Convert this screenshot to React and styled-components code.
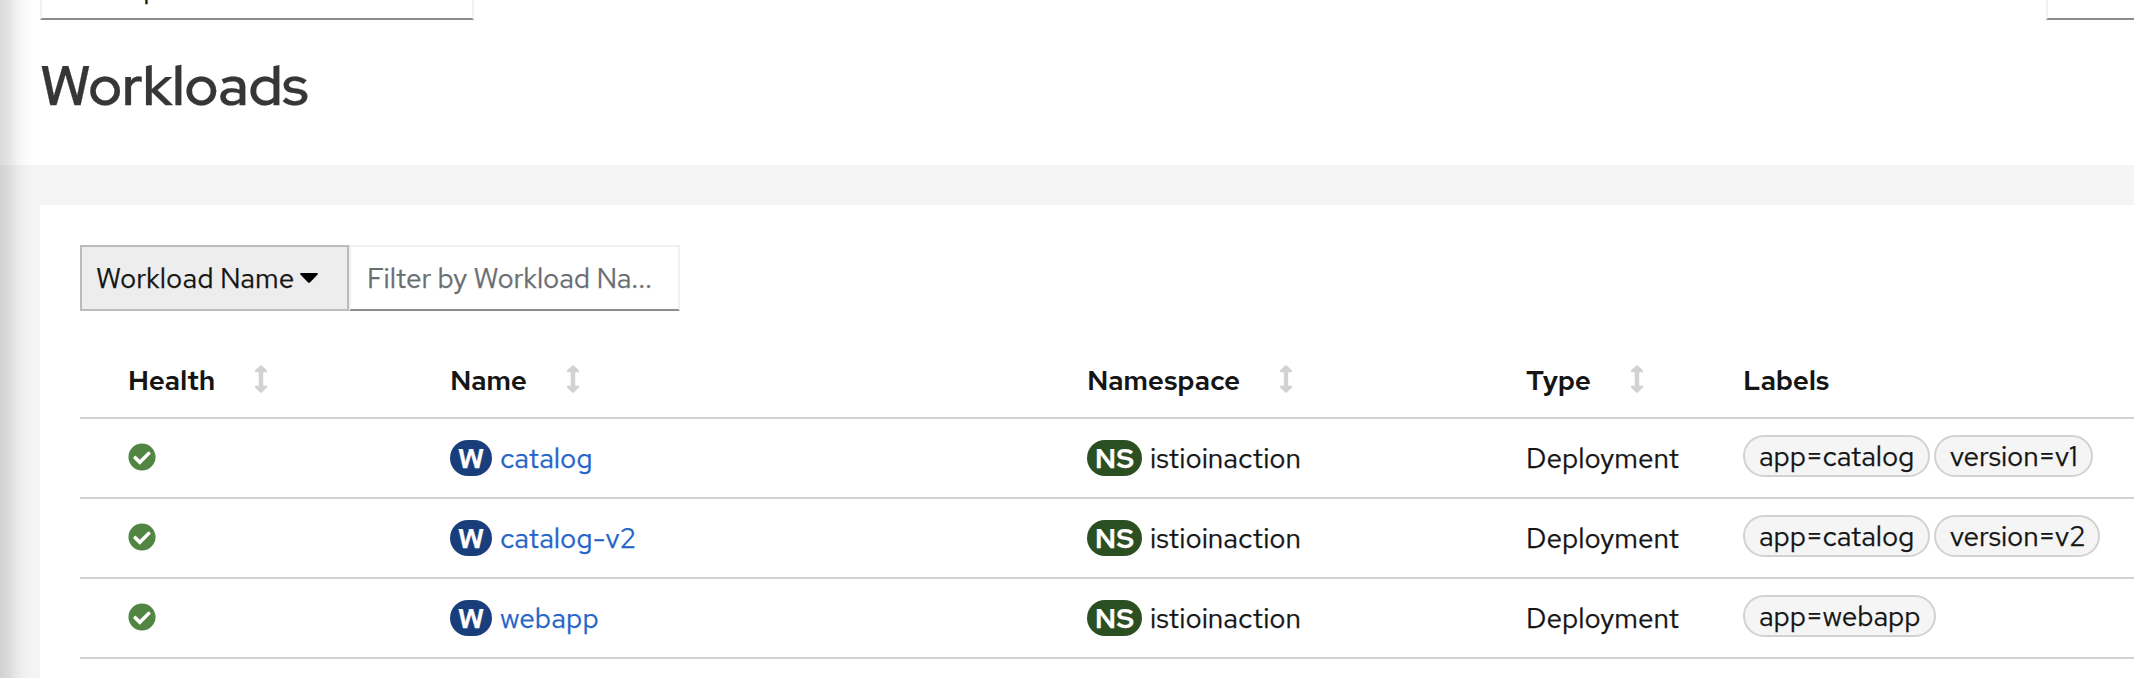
import React from "react";
import styled, { createGlobalStyle } from "styled-components";

const GlobalStyle = createGlobalStyle`
  * { box-sizing: border-box; }
  body {
    margin: 0;
    background: #fff;
    color: #151515;
    font-family: "Red Hat Text", Inter, "Liberation Sans", sans-serif;
    font-size: 28px;
    overflow: hidden;
  }
`;

const Page = styled.div`
  position: relative;
  display: flex;
  flex-direction: column;
  width: 100%;
  height: 678px;
  overflow: hidden;
  background: #f5f5f5;
  -webkit-text-stroke: 0.25px currentColor;
`;

const SidebarShadow = styled.div`
  position: absolute;
  inset: 0 auto 0 0;
  width: 40px;
  pointer-events: none;
  background: linear-gradient(
    to right,
    rgba(3, 3, 3, 0.145) 0,
    rgba(3, 3, 3, 0.105) 9px,
    rgba(3, 3, 3, 0.05) 17px,
    rgba(3, 3, 3, 0.018) 25px,
    rgba(3, 3, 3, 0.004) 33px,
    rgba(3, 3, 3, 0) 40px
  );
`;

const PageHeader = styled.header`
  flex: none;
  height: 165px;
  padding-left: 40px;
  background: #fff;
`;

const TopBar = styled.div`
  display: flex;
  justify-content: space-between;
  height: 20px;
`;

const Select = styled.div`
  display: flex;
  align-items: flex-end;
  width: ${(p) => p.$width}px;
  height: 20px;
  padding: 0 0 12px 14px;
  overflow: hidden;
  border: 2px solid #f0f0f0;
  border-top: 0;
  border-right-width: ${(p) => (p.$cut ? 0 : 2)}px;
  border-bottom-color: #8a8d90;
  line-height: 36px;
`;

const Title = styled.h1`
  margin: 30px 0 0;
  font-family: "Red Hat Display", Inter, "Liberation Sans", sans-serif;
  font-size: 56px;
  line-height: 70px;
  font-weight: 600;
  color: #363636;
`;

const Card = styled.main`
  flex: 1;
  margin: 40px 0 0 40px;
  padding: 40px 0 0 40px;
  background: #fff;
`;

const Toolbar = styled.div`
  display: flex;
  height: 66px;
`;

const FilterToggle = styled.button`
  display: flex;
  align-items: center;
  gap: 6px;
  width: 269px;
  padding: 0 0 0 14px;
  border: 2px solid #bbb;
  background: #ededed;
  color: #151515;
  font: inherit;
  white-space: nowrap;
`;

const FilterInput = styled.div`
  display: flex;
  align-items: center;
  width: 331px;
  padding-left: 16px;
  border: 2px solid #f0f0f0;
  border-bottom-color: #8a8d90;
  color: #6a6e73;
  letter-spacing: -0.12px;
  white-space: nowrap;
`;

const Table = styled.table`
  width: 2054px;
  margin-top: 28px;
  table-layout: fixed;
  border-collapse: separate;
  border-spacing: 0;
`;

const Col = styled.col`
  width: ${(p) => p.$width}px;
`;

const HeadCell = styled.th`
  height: 80px;
  padding: 2px 0 0 ${(p) => p.$inset || 0}px;
  border-bottom: 2px solid #d2d2d2;
  text-align: left;
  font-weight: 600;
  -webkit-text-stroke: 0;
`;

const HeadContent = styled.div`
  display: flex;
  align-items: center;
  height: 42px;
`;

const HeadText = styled.span`
  width: ${(p) => (p.$width ? `${p.$width}px` : "auto")};
  padding-top: 1px;
  letter-spacing: -0.25px;
  white-space: nowrap;
`;

const Cell = styled.td`
  height: 80px;
  padding: 0 0 0 ${(p) => p.$inset || 0}px;
  border-bottom: 2px solid #d2d2d2;
`;

const CellContent = styled.div`
  display: flex;
  align-items: center;
  gap: 8px;
  height: 78px;
  padding-bottom: ${(p) => p.$bottom || 0}px;
`;

const Badge = styled.span`
  display: flex;
  align-items: center;
  justify-content: center;
  width: ${(p) => p.$width}px;
  height: 36px;
  border-radius: 18px;
  background: ${(p) => p.$color};
  color: #fff;
  font-weight: 600;
`;

const Link = styled.a`
  color: #2464c9;
`;

const Labels = styled.div`
  display: flex;
  align-items: center;
  gap: 4px;
  height: 78px;
  padding-bottom: 4px;
`;

const Label = styled.span`
  display: flex;
  align-items: center;
  width: ${(p) => p.$width}px;
  height: 42px;
  padding-left: 14px;
  border: 2px solid #d2d2d2;
  border-radius: 21px;
  background: #f5f5f5;
  letter-spacing: -0.15px;
  white-space: nowrap;
`;

const Icon = styled.svg`
  display: block;
  flex: none;
`;

const SortIcon = () => (
  <Icon width="12" height="28" viewBox="0 0 12 28" fill="#d2d2d2">
    <path d="M5.3.4Q6-.3 6.7.4L11.6 5Q12 5.5 12 6V7.2H8.2V20.8H12V22Q12 22.5 11.6 23L6.7 27.6Q6 28.3 5.3 27.6L.4 23Q0 22.5 0 22V20.8H3.8V7.2H0V6Q0 5.5.4 5Z" />
  </Icon>
);

const HealthyIcon = () => (
  <Icon width="28" height="28" viewBox="0 0 512 512" fill="#528541">
    <path d="M504 256c0 136.967-111.033 248-248 248S8 392.967 8 256 119.033 8 256 8s248 111.033 248 248zM227.314 387.314l184-184c6.248-6.248 6.248-16.379 0-22.627l-22.627-22.627c-6.248-6.249-16.379-6.249-22.628 0L216 308.118l-70.059-70.059c-6.248-6.248-16.379-6.248-22.628 0l-22.627 22.627c-6.248 6.248-6.248 16.379 0 22.627l104 104c6.249 6.249 16.379 6.249 22.628.001z" />
  </Icon>
);

const CaretIcon = () => (
  <Icon width="18" height="10" viewBox="0 0 18 10" fill="#000">
    <path d="M1.2 0H16.8Q18.6.3 17.4 1.7L10.2 9.2Q9 10.4 7.8 9.2L.6 1.7Q-.6.3 1.2 0Z" />
  </Icon>
);

const columns = [
  { title: "Health", width: 370, inset: 48, sortAt: 127 },
  { title: "Name", width: 637, sortAt: 117 },
  { title: "Namespace", width: 439, sortAt: 193 },
  { title: "Type", width: 217, sortAt: 105 },
  { title: "Labels", width: 391 },
];

const catalog = { text: "app=catalog", width: 187 };

const workloads = [
  { name: "catalog", labels: [catalog, { text: "version=v1", width: 159 }] },
  { name: "catalog-v2", labels: [catalog, { text: "version=v2", width: 166 }] },
  { name: "webapp", labels: [{ text: "app=webapp", width: 193 }] },
];

export default function App() {
  return (
    <Page>
      <GlobalStyle />
      <PageHeader>
        <TopBar>
          <Select $width={434}>Namespace</Select>
          <Select $width={88} $cut />
        </TopBar>
        <Title>Workloads</Title>
      </PageHeader>
      <Card>
        <Toolbar>
          <FilterToggle>
            Workload Name
            <CaretIcon />
          </FilterToggle>
          <FilterInput>Filter by Workload Na...</FilterInput>
        </Toolbar>
        <Table>
          <colgroup>
            {columns.map((c) => (
              <Col key={c.title} $width={c.width} />
            ))}
          </colgroup>
          <thead>
            <tr>
              {columns.map((c) => (
                <HeadCell key={c.title} $inset={c.inset}>
                  <HeadContent>
                    <HeadText $width={c.sortAt}>{c.title}</HeadText>
                    {c.sortAt && <SortIcon />}
                  </HeadContent>
                </HeadCell>
              ))}
            </tr>
          </thead>
          <tbody>
            {workloads.map((w) => (
              <tr key={w.name}>
                <Cell $inset={48}>
                  <CellContent $bottom={2}>
                    <HealthyIcon />
                  </CellContent>
                </Cell>
                <Cell>
                  <CellContent>
                    <Badge $width={42} $color="#1a3e7b">W</Badge>
                    <Link>{w.name}</Link>
                  </CellContent>
                </Cell>
                <Cell>
                  <CellContent>
                    <Badge $width={55} $color="#2b4f20">NS</Badge>
                    <span>istioinaction</span>
                  </CellContent>
                </Cell>
                <Cell>
                  <CellContent>
                    <span>Deployment</span>
                  </CellContent>
                </Cell>
                <Cell>
                  <Labels>
                    {w.labels.map((l) => (
                      <Label key={l.text} $width={l.width}>{l.text}</Label>
                    ))}
                  </Labels>
                </Cell>
              </tr>
            ))}
          </tbody>
        </Table>
      </Card>
      <SidebarShadow />
    </Page>
  );
}
